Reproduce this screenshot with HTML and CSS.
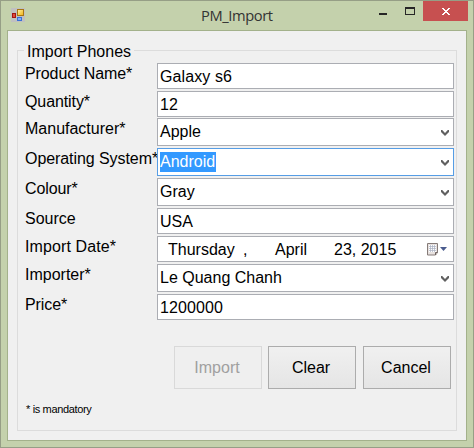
FILE: index.html
```
<!DOCTYPE html>
<html lang="en">
<head>
<meta charset="utf-8">
<title>PM_Import</title>
<link rel="stylesheet" href="styles.css">
</head>
<body>
<div class="window">
  <header class="titlebar">
    <svg class="app-icon" width="14" height="14" viewBox="0 0 14 14">
      <defs><linearGradient id="gold" x2="1" y2="1"><stop stop-color="#fff3a8"/><stop offset="1" stop-color="#f0b010"/></linearGradient></defs>
      <rect width="14" height="14" fill="#c0c0c0"/>
      <rect x="6.5" y="1.5" width="6" height="6" fill="url(#gold)" stroke="#a87512"/>
      <rect x="1.5" y="5.5" width="3" height="4" fill="#e04a3a" stroke="#a31515"/>
      <rect x="6.5" y="9.5" width="4" height="3" fill="#7fb0f5" stroke="#3a70d8"/>
    </svg>
    <h1 class="title">PM_Import</h1>
    <div class="controls">
      <svg class="minimize" width="8" height="2"><rect width="8" height="2" fill="#262626"/></svg>
      <svg class="maximize" width="10" height="8"><path fill="#262626" fill-rule="evenodd" d="M0 0h10v8H0zM1 2v5h8V2z"/></svg>
      <div class="close"><svg width="8" height="7" viewBox="0 0 8 7" shape-rendering="crispEdges"><path fill="#fff" d="M0 0h2v1h1v1h2V1h1V0h2v1H7v1H6v1H5v1h1v1h1v1h1v1H6V6H5V5H3v1H2v1H0V6h1V5h1V4h1V3H2V2H1V1H0z"/></svg></div>
    </div>
  </header>
  <main class="client">
    <fieldset class="group">
      <legend><span class="caption">Import Phones</span></legend>
      <div class="form">
        <span class="label tight">Product Name*</span><div class="field"><span class="wide">Galaxy s6</span></div>
        <span class="label tight">Quantity*</span><div class="field">12</div>
        <span class="label">Manufacturer*</span><div class="field combo">Apple<svg class="chevron" width="8" height="6"><path d="M0 0h1.2L4 2.9 6.8 0H8v2L4 6 0 2z"/></svg></div>
        <span class="label system">Operating System*</span><div class="field combo focused"><span class="selected">Android</span><svg class="chevron" width="8" height="6"><path d="M0 0h1.2L4 2.9 6.8 0H8v2L4 6 0 2z"/></svg></div>
        <span class="label tight">Colour*</span><div class="field combo">Gray<svg class="chevron" width="8" height="6"><path d="M0 0h1.2L4 2.9 6.8 0H8v2L4 6 0 2z"/></svg></div>
        <span class="label">Source</span><div class="field">USA</div>
        <span class="label wide">Import Date*</span>
        <div class="field date">
          <span class="weekday">Thursday</span><span class="comma">,</span><span class="month">April</span><span class="day">23, 2015</span>
          <svg class="calendar" width="20" height="13" viewBox="0 0 20 13"><path d="M.5.5h10v9l-2 2.5h-8z" fill="#e8e2e0" stroke="#857b78"/><path d="M2 2h7v7H2z" fill="#fff"/><path d="M2 3.5h7M2 5.5h7M2 7.5h7M3.5 2v7M5.5 2v7M7.5 2v7" stroke="#a9b0c2" stroke-width=".7"/><path d="M10.5 9.5h-2V12" fill="#c5bcb8" stroke="#6d6260"/><path d="M13 4h7l-3.5 4z" fill="#4a5c8e"/></svg>
        </div>
        <span class="label">Importer*</span><div class="field combo">Le Quang Chanh<svg class="chevron" width="8" height="6"><path d="M0 0h1.2L4 2.9 6.8 0H8v2L4 6 0 2z"/></svg></div>
        <span class="label tight">Price*</span><div class="field"><span class="wide">1200000</span></div>
      </div>
      <div class="actions">
        <button disabled>Import</button>
        <button>Clear</button>
        <button class="cancel">Cancel</button>
      </div>
      <p class="note">* is mandatory</p>
    </fieldset>
  </main>
</div>
</body>
</html>
```
FILE: styles.css
```
* { box-sizing: border-box; }
body { margin: 0; font: 16px/18px "Liberation Sans", Arial, sans-serif; color: #000; }
.window {
  width: 474px;
  height: 448px;
  display: flex;
  flex-direction: column;
  background: #c4d1ac;
  border: 1px solid #969e86;
  padding: 0 6px 6px;
}
.titlebar { height: 29px; display: flex; flex: none; align-items: flex-start; }
.app-icon { margin: 7px 0 0 4px; }
.title {
  margin: 3px 0 0 176px;
  width: 140px;
  font: 14.7px/22px "Open Sans", "Noto Sans", sans-serif;
  letter-spacing: -0.4px;
  color: #333;
}
.controls { display: flex; margin-left: auto; margin-right: -1px; }
.minimize { margin: 12px 18px 0 0; }
.maximize { margin: 6px 8px 0 0; }
.close { width: 45px; height: 20px; background: #c75050; display: flex; justify-content: center; padding-top: 7px; }
.client { flex: 1; background: #f0f0f0; border: 1px solid #a3b18b; padding: 10px 9px 9px; }
.group {
  height: 390px;
  margin: 0;
  padding: 0;
  min-width: 0;
  border: 1px solid #dcdcdc;
}
.group legend { height: 18px; line-height: 20px; margin-left: 6px; padding: 0 3px; }
.caption { position: relative; top: 1px; }
.form {
  display: grid;
  grid-template-columns: 132px 297px;
  grid-template-rows: 26px 26px 28px 28px 28px 26px 26px 28px 26px;
  row-gap: 2px;
  margin: 4px 0 0 7px;
}
.form > :nth-child(n+5) { position: relative; top: -1px; }
.label { white-space: nowrap; padding-top: 2px; }
.label.tight { letter-spacing: -0.1px; }
.wide { letter-spacing: 0.1px; }
.system { letter-spacing: -0.07px; }
.field {
  display: flex;
  align-items: center;
  background: #fff;
  border: 1px solid #abadb3;
  padding: 1px 4px 0 2px;
}
.combo { padding: 0 4px 1px 2px; }
.focused { border-color: #569de5; }
.selected { background: #3399ff; color: #fff; height: 20px; line-height: 20px; width: 56px; }
.chevron { margin-left: auto; margin-top: 3px; fill: #606060; }
.weekday { margin-left: 8px; width: 75px; }
.comma { width: 32px; }
.month { width: 59px; }
.calendar { margin-left: auto; margin-right: 2px; }
.actions { display: flex; margin: 25px 0 0 156px; }
.actions button {
  width: 88px;
  height: 43px;
  margin: 0 6px 0 0;
  padding: 1px 2px 0 0;
  font: inherit;
  color: #000;
  border: 1px solid #acacac;
  background: linear-gradient(#f0f0f0, #e5e5e5);
}
.actions button:disabled { color: #a0a0a0; background: #efefef; border-color: #d9d9d9; }
.actions .cancel { margin: 0 0 0 1px; }
.note { margin: 13px 0 0 8px; font-size: 11px; line-height: 14px; letter-spacing: -0.35px; }
```
